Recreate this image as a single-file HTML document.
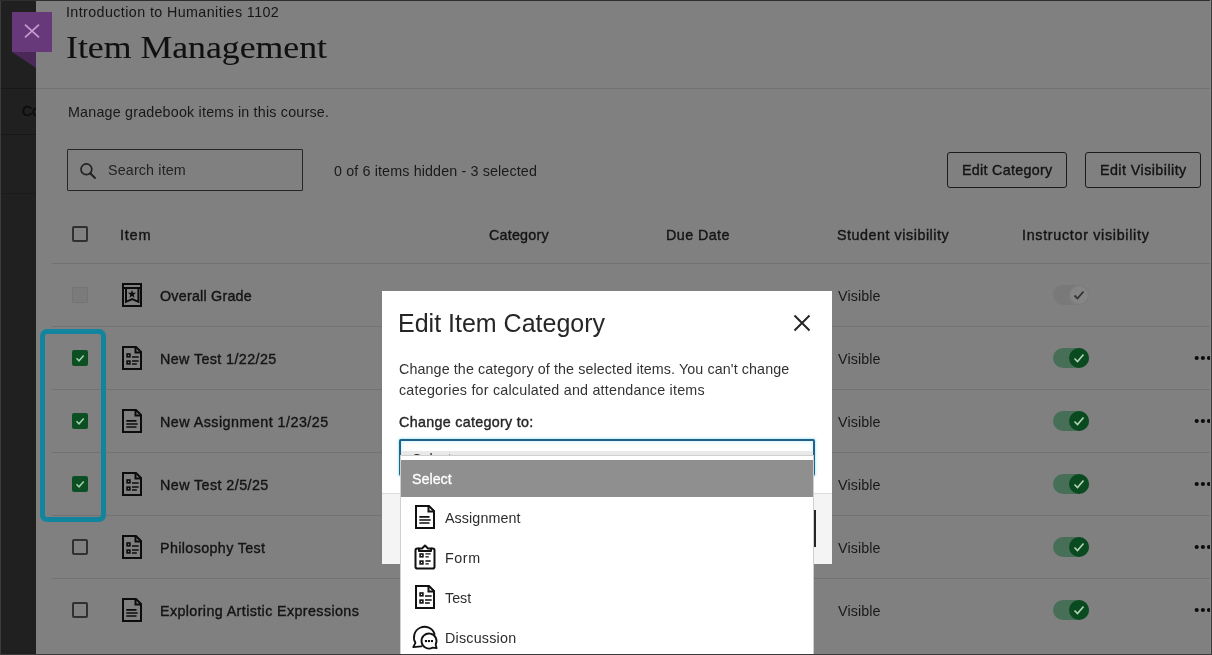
<!DOCTYPE html>
<html><head><meta charset="utf-8">
<style>
*{margin:0;padding:0;box-sizing:border-box}
html,body{width:1212px;height:655px;overflow:hidden;background:#808080}
body{position:relative;font-family:"Liberation Sans",sans-serif;color:#141414}
.a{position:absolute}
.t{position:absolute;white-space:nowrap;line-height:1;will-change:transform}
svg{position:absolute;overflow:visible}
</style></head><body>
<div class="a" style="left:0px;top:0px;width:36px;height:655px;background:#202020;"></div>
<div class="a" style="left:0px;top:0px;width:1px;height:655px;background:#3c3c3c;"></div>
<div class="a" style="left:1px;top:88px;width:35px;height:1px;background:#181818;"></div>
<div class="a" style="left:1px;top:134px;width:35px;height:1px;background:#181818;"></div>
<div class="a" style="left:1px;top:193px;width:35px;height:1px;background:#1a1a1a;"></div>
<div class="a" style="left:22px;top:104px;width:14px;height:16px;overflow:hidden"><div class="t" style="left:0;top:0;font-size:14px;color:#0c0c0c;-webkit-text-stroke:0.45px #0c0c0c">Co</div></div>
<svg style="left:12px;top:52px" width="24" height="16"><path d="M0 0H24V16Z" fill="#4a2858"/></svg>
<div class="a" style="left:12px;top:12px;width:40px;height:40px;background:#67397b;"></div>
<svg style="left:24px;top:24px" width="16" height="14"><path d="M1 0.6L15 13.4M15 0.6L1 13.4" stroke="#c29dcd" stroke-width="1.7"/></svg>
<div class="t" style="left:66px;top:4.90px;font-size:14.3px;color:#161616;letter-spacing:0.4px;">Introduction to Humanities 1102</div>
<div class="t" style="left:66px;top:28px;font-family:'Liberation Serif',serif;font-size:32px;line-height:38px;color:#101010;transform:scaleX(1.117);transform-origin:0 0;-webkit-text-stroke:0.1px #101010">Item Management</div>
<div class="a" style="left:36px;top:88px;width:1176px;height:1px;background:#727272;"></div>
<div class="t" style="left:68px;top:104.90px;font-size:14.3px;color:#181818;letter-spacing:0.2px;">Manage gradebook items in this course.</div>
<div class="a" style="left:67px;top:149px;width:236px;height:42px;background:transparent;border:1px solid #262626;border-radius:1px"></div>
<svg style="left:79px;top:162px" width="18" height="18"><circle cx="7.4" cy="7.3" r="5.4" fill="none" stroke="#222" stroke-width="1.7"/><path d="M11.5 11.5L16 16" stroke="#222" stroke-width="1.9" stroke-linecap="round"/></svg>
<div class="t" style="left:108px;top:162.90px;font-size:14.3px;color:#222;letter-spacing:0.15px;">Search item</div>
<div class="t" style="left:334px;top:163.90px;font-size:14.3px;color:#1a1a1a;letter-spacing:0.135px;">0 of 6 items hidden - 3 selected</div>
<div class="a" style="left:947px;top:152px;width:120px;height:36px;background:transparent;border:1px solid #1c1c1c;border-radius:3px"></div>
<div class="t" style="left:962px;top:162.90px;font-size:14.3px;color:#141414;letter-spacing:0.292px;-webkit-text-stroke:0.38px #141414;">Edit Category</div>
<div class="a" style="left:1085px;top:152px;width:116px;height:36px;background:transparent;border:1px solid #1c1c1c;border-radius:3px"></div>
<div class="t" style="left:1100px;top:162.90px;font-size:14.3px;color:#141414;letter-spacing:0.443px;-webkit-text-stroke:0.38px #141414;">Edit Visibility</div>
<div class="a" style="left:72px;top:226px;width:16px;height:16px;background:transparent;border:2px solid #303030;border-radius:2px"></div>
<div class="t" style="left:120px;top:227.64px;font-size:14.6px;color:#141414;letter-spacing:0.75px;-webkit-text-stroke:0.38px #141414;">Item</div>
<div class="t" style="left:489px;top:227.90px;font-size:14.3px;color:#141414;letter-spacing:0.229px;-webkit-text-stroke:0.38px #141414;">Category</div>
<div class="t" style="left:666px;top:227.90px;font-size:14.3px;color:#141414;letter-spacing:0.429px;-webkit-text-stroke:0.38px #141414;">Due Date</div>
<div class="t" style="left:837px;top:227.90px;font-size:14.3px;color:#141414;letter-spacing:0.541px;-webkit-text-stroke:0.38px #141414;">Student visibility</div>
<div class="t" style="left:1022px;top:227.90px;font-size:14.3px;color:#141414;letter-spacing:0.7px;-webkit-text-stroke:0.38px #141414;">Instructor visibility</div>
<div class="a" style="left:52px;top:263px;width:1160px;height:1px;background:#727272;"></div>
<div class="a" style="left:52px;top:326px;width:1160px;height:1px;background:#727272;"></div>
<div class="a" style="left:52px;top:389px;width:1160px;height:1px;background:#727272;"></div>
<div class="a" style="left:52px;top:452px;width:1160px;height:1px;background:#727272;"></div>
<div class="a" style="left:52px;top:515px;width:1160px;height:1px;background:#727272;"></div>
<div class="a" style="left:52px;top:578px;width:1160px;height:1px;background:#727272;"></div>
<div class="a" style="left:72px;top:287px;width:16px;height:16px;background:#7b7b7b;border:1px solid #747474;border-radius:1px"></div>
<svg style="left:122px;top:283px" width="20" height="24" viewBox="0 0 20 24"><g fill="none" stroke="#0c0c0c" stroke-width="2"><rect x="1" y="1" width="18" height="22"/><path d="M1 5H19"/><path d="M4 5V18.8L10.2 16L16.4 18.8V5"/></g><path d="M10.00 6.90L11.09 9.70L14.09 9.87L11.76 11.77L12.53 14.68L10.00 13.05L7.47 14.68L8.24 11.77L5.91 9.87L8.91 9.70Z" fill="#0c0c0c"/></svg>
<div class="t" style="left:160px;top:288.90px;font-size:14.3px;color:#141414;letter-spacing:0.225px;-webkit-text-stroke:0.38px #141414;">Overall Grade</div>
<div class="t" style="left:838px;top:288.90px;font-size:14.3px;color:#181818;letter-spacing:0.1px;">Visible</div>
<div class="a" style="left:1053px;top:285px;width:36px;height:20px;background:#797979;border-radius:10px"></div>
<div class="a" style="left:1069px;top:285px;width:20px;height:20px;background:#858585;border-radius:50%;box-shadow:0 0 0 1px #7c7c7c inset"></div>
<svg style="left:1069px;top:285px" width="20" height="20"><path d="M5.5 10.5L8.5 13.5L14.5 6.5" fill="none" stroke="#333" stroke-width="1.8"/></svg>
<div class="t" style="left:160px;top:351.90px;font-size:14.3px;color:#141414;letter-spacing:0.4px;-webkit-text-stroke:0.38px #141414;">New Test 1/22/25</div>
<div class="t" style="left:838px;top:351.90px;font-size:14.3px;color:#181818;letter-spacing:0.1px;">Visible</div>
<div class="a" style="left:1053px;top:348px;width:36px;height:20px;background:#476f57;border-radius:10px"></div>
<div class="a" style="left:1069px;top:348px;width:20px;height:20px;background:#0a4a20;border-radius:50%"></div>
<svg style="left:1069px;top:348px" width="20" height="20"><path d="M5.5 10.5L8.5 13.5L14.5 6.5" fill="none" stroke="#b5d3bc" stroke-width="1.6"/></svg>
<svg style="left:1195px;top:355px" width="20" height="6"><circle cx="1.7" cy="3" r="2.1" fill="#0c0c0c"/><circle cx="7.9" cy="3" r="2.1" fill="#0c0c0c"/><circle cx="14" cy="3" r="2.1" fill="#0c0c0c"/></svg>
<div class="a" style="left:72px;top:350px;width:16px;height:16px;background:#0b4f22;border-radius:2px"></div>
<svg style="left:72px;top:350px" width="16" height="16"><path d="M4.5 8.3L7 10.8L11.7 5.5" fill="none" stroke="#a3d0ad" stroke-width="1.5"/></svg>
<svg style="left:122px;top:346px" width="20" height="24" viewBox="0 0 20 24"><g fill="none" stroke="#0c0c0c" stroke-width="2"><path d="M1 1H14L19 6V23H1Z"/><path d="M13.5 1V6.5H19"/></g><g fill="none" stroke="#0c0c0c" stroke-width="1.6"><rect x="5.1" y="8" width="2.8" height="2.8"/><rect x="5.1" y="15.1" width="2.8" height="2.8"/></g><g stroke="#0c0c0c" stroke-width="1.5"><path d="M10 10.9H16.7M10 15H16.7M10 17.9H14.8"/></g></svg>
<div class="t" style="left:160px;top:414.90px;font-size:14.3px;color:#141414;letter-spacing:0.476px;-webkit-text-stroke:0.38px #141414;">New Assignment 1/23/25</div>
<div class="t" style="left:838px;top:414.90px;font-size:14.3px;color:#181818;letter-spacing:0.1px;">Visible</div>
<div class="a" style="left:1053px;top:411px;width:36px;height:20px;background:#476f57;border-radius:10px"></div>
<div class="a" style="left:1069px;top:411px;width:20px;height:20px;background:#0a4a20;border-radius:50%"></div>
<svg style="left:1069px;top:411px" width="20" height="20"><path d="M5.5 10.5L8.5 13.5L14.5 6.5" fill="none" stroke="#b5d3bc" stroke-width="1.6"/></svg>
<svg style="left:1195px;top:418px" width="20" height="6"><circle cx="1.7" cy="3" r="2.1" fill="#0c0c0c"/><circle cx="7.9" cy="3" r="2.1" fill="#0c0c0c"/><circle cx="14" cy="3" r="2.1" fill="#0c0c0c"/></svg>
<div class="a" style="left:72px;top:413px;width:16px;height:16px;background:#0b4f22;border-radius:2px"></div>
<svg style="left:72px;top:413px" width="16" height="16"><path d="M4.5 8.3L7 10.8L11.7 5.5" fill="none" stroke="#a3d0ad" stroke-width="1.5"/></svg>
<svg style="left:122px;top:409px" width="20" height="24" viewBox="0 0 20 24"><g fill="none" stroke="#0c0c0c" stroke-width="2"><path d="M1 1H14L19 6V23H1Z"/><path d="M13.5 1V6.5H19"/></g><g stroke="#0c0c0c" stroke-width="1.7"><path d="M4.3 11.9H14.5M4.3 15H15.7M4.3 18H14.5"/></g></svg>
<div class="t" style="left:160px;top:477.90px;font-size:14.3px;color:#141414;letter-spacing:0.429px;-webkit-text-stroke:0.38px #141414;">New Test 2/5/25</div>
<div class="t" style="left:838px;top:477.90px;font-size:14.3px;color:#181818;letter-spacing:0.1px;">Visible</div>
<div class="a" style="left:1053px;top:474px;width:36px;height:20px;background:#476f57;border-radius:10px"></div>
<div class="a" style="left:1069px;top:474px;width:20px;height:20px;background:#0a4a20;border-radius:50%"></div>
<svg style="left:1069px;top:474px" width="20" height="20"><path d="M5.5 10.5L8.5 13.5L14.5 6.5" fill="none" stroke="#b5d3bc" stroke-width="1.6"/></svg>
<svg style="left:1195px;top:481px" width="20" height="6"><circle cx="1.7" cy="3" r="2.1" fill="#0c0c0c"/><circle cx="7.9" cy="3" r="2.1" fill="#0c0c0c"/><circle cx="14" cy="3" r="2.1" fill="#0c0c0c"/></svg>
<div class="a" style="left:72px;top:476px;width:16px;height:16px;background:#0b4f22;border-radius:2px"></div>
<svg style="left:72px;top:476px" width="16" height="16"><path d="M4.5 8.3L7 10.8L11.7 5.5" fill="none" stroke="#a3d0ad" stroke-width="1.5"/></svg>
<svg style="left:122px;top:472px" width="20" height="24" viewBox="0 0 20 24"><g fill="none" stroke="#0c0c0c" stroke-width="2"><path d="M1 1H14L19 6V23H1Z"/><path d="M13.5 1V6.5H19"/></g><g fill="none" stroke="#0c0c0c" stroke-width="1.6"><rect x="5.1" y="8" width="2.8" height="2.8"/><rect x="5.1" y="15.1" width="2.8" height="2.8"/></g><g stroke="#0c0c0c" stroke-width="1.5"><path d="M10 10.9H16.7M10 15H16.7M10 17.9H14.8"/></g></svg>
<div class="t" style="left:160px;top:540.90px;font-size:14.3px;color:#141414;letter-spacing:0.371px;-webkit-text-stroke:0.38px #141414;">Philosophy Test</div>
<div class="t" style="left:838px;top:540.90px;font-size:14.3px;color:#181818;letter-spacing:0.1px;">Visible</div>
<div class="a" style="left:1053px;top:537px;width:36px;height:20px;background:#476f57;border-radius:10px"></div>
<div class="a" style="left:1069px;top:537px;width:20px;height:20px;background:#0a4a20;border-radius:50%"></div>
<svg style="left:1069px;top:537px" width="20" height="20"><path d="M5.5 10.5L8.5 13.5L14.5 6.5" fill="none" stroke="#b5d3bc" stroke-width="1.6"/></svg>
<svg style="left:1195px;top:544px" width="20" height="6"><circle cx="1.7" cy="3" r="2.1" fill="#0c0c0c"/><circle cx="7.9" cy="3" r="2.1" fill="#0c0c0c"/><circle cx="14" cy="3" r="2.1" fill="#0c0c0c"/></svg>
<div class="a" style="left:72px;top:539px;width:16px;height:16px;background:transparent;border:2px solid #303030;border-radius:2px"></div>
<svg style="left:122px;top:535px" width="20" height="24" viewBox="0 0 20 24"><g fill="none" stroke="#0c0c0c" stroke-width="2"><path d="M1 1H14L19 6V23H1Z"/><path d="M13.5 1V6.5H19"/></g><g fill="none" stroke="#0c0c0c" stroke-width="1.6"><rect x="5.1" y="8" width="2.8" height="2.8"/><rect x="5.1" y="15.1" width="2.8" height="2.8"/></g><g stroke="#0c0c0c" stroke-width="1.5"><path d="M10 10.9H16.7M10 15H16.7M10 17.9H14.8"/></g></svg>
<div class="t" style="left:160px;top:603.90px;font-size:14.3px;color:#141414;letter-spacing:0.39px;-webkit-text-stroke:0.38px #141414;">Exploring Artistic Expressions</div>
<div class="t" style="left:838px;top:603.90px;font-size:14.3px;color:#181818;letter-spacing:0.1px;">Visible</div>
<div class="a" style="left:1053px;top:600px;width:36px;height:20px;background:#476f57;border-radius:10px"></div>
<div class="a" style="left:1069px;top:600px;width:20px;height:20px;background:#0a4a20;border-radius:50%"></div>
<svg style="left:1069px;top:600px" width="20" height="20"><path d="M5.5 10.5L8.5 13.5L14.5 6.5" fill="none" stroke="#b5d3bc" stroke-width="1.6"/></svg>
<svg style="left:1195px;top:607px" width="20" height="6"><circle cx="1.7" cy="3" r="2.1" fill="#0c0c0c"/><circle cx="7.9" cy="3" r="2.1" fill="#0c0c0c"/><circle cx="14" cy="3" r="2.1" fill="#0c0c0c"/></svg>
<div class="a" style="left:72px;top:602px;width:16px;height:16px;background:transparent;border:2px solid #303030;border-radius:2px"></div>
<svg style="left:122px;top:598px" width="20" height="24" viewBox="0 0 20 24"><g fill="none" stroke="#0c0c0c" stroke-width="2"><path d="M1 1H14L19 6V23H1Z"/><path d="M13.5 1V6.5H19"/></g><g stroke="#0c0c0c" stroke-width="1.7"><path d="M4.3 11.9H14.5M4.3 15H15.7M4.3 18H14.5"/></g></svg>
<div class="a" style="left:40px;top:329px;width:66px;height:193px;background:transparent;border:5px solid #12849e;border-radius:7px"></div>
<div class="a" style="left:382px;top:291px;width:450px;height:273px;background:#fff;"></div>
<div class="a" style="left:382px;top:493px;width:450px;height:71px;background:#f4f4f4;border-top:1px solid #dcdcdc"></div>
<div class="t" style="left:398px;top:311.34px;font-size:25px;color:#262626;">Edit Item Category</div>
<svg style="left:793px;top:314px" width="18" height="18"><path d="M1.5 1.5L16.5 16.5M16.5 1.5L1.5 16.5" stroke="#262626" stroke-width="2"/></svg>
<div class="t" style="left:399px;top:361.90px;font-size:14.3px;color:#333;letter-spacing:0.103px;">Change the category of the selected items. You can't change</div>
<div class="t" style="left:399px;top:382.90px;font-size:14.3px;color:#333;letter-spacing:0.222px;">categories for calculated and attendance items</div>
<div class="t" style="left:399px;top:415.40px;font-size:14.3px;color:#262626;letter-spacing:0.306px;-webkit-text-stroke:0.38px #262626;">Change category to:</div>
<div class="a" style="left:399px;top:439px;width:416px;height:37px;background:#fff;border:2px solid #22628a;border-radius:2px;box-shadow:0 0 2px 1px rgba(120,220,240,0.5), inset 0 0 3px 1px rgba(150,230,245,0.45)"></div>
<div class="a" style="left:401px;top:451px;width:412px;height:4px;background:#e9e9e9;overflow:hidden"><div class="t" style="left:11px;top:1px;font-size:14.3px;color:#262626">Select</div></div>
<div class="a" style="left:400px;top:455px;width:414px;height:205px;background:#fff;border:1px solid #cfcfcf;border-bottom:none"></div>
<div class="a" style="left:401px;top:460px;width:412px;height:37px;background:#8f8f8f;"></div>
<div class="t" style="left:412px;top:471.90px;font-size:14.3px;color:#fff;-webkit-text-stroke:0.3px #fff;">Select</div>
<div class="a" style="left:814px;top:510px;width:2px;height:37px;background:#262626;"></div>
<div class="t" style="left:445px;top:510.90px;font-size:14.3px;color:#2c2c2c;letter-spacing:0.089px;">Assignment</div>
<div class="t" style="left:445px;top:550.90px;font-size:14.3px;color:#2c2c2c;letter-spacing:0.567px;">Form</div>
<div class="t" style="left:445px;top:590.90px;font-size:14.3px;color:#2c2c2c;">Test</div>
<div class="t" style="left:445px;top:630.90px;font-size:14.3px;color:#2c2c2c;letter-spacing:0.222px;">Discussion</div>
<svg style="left:415px;top:505px" width="20" height="24" viewBox="0 0 20 24"><g fill="none" stroke="#111" stroke-width="2"><path d="M1 1H14L19 6V23H1Z"/><path d="M13.5 1V6.5H19"/></g><g stroke="#111" stroke-width="1.7"><path d="M4.3 11.9H14.5M4.3 15H15.7M4.3 18H14.5"/></g></svg>
<svg style="left:414px;top:544px" width="22" height="26" viewBox="0 0 22 26"><g fill="none" stroke="#111" stroke-width="2" stroke-linejoin="round"><path d="M5 4.5H3.3Q1.5 4.5 1.5 6.3V22.7Q1.5 24.5 3.3 24.5H18.7Q20.5 24.5 20.5 22.7V6.3Q20.5 4.5 18.7 4.5H17"/><path d="M5 4.5V7H17V4.5H14L11 1.5L8 4.5Z"/></g><g fill="none" stroke="#111" stroke-width="1.6"><rect x="6.1" y="10" width="2.8" height="2.8"/><rect x="6.1" y="17.1" width="2.8" height="2.8"/></g><g stroke="#111" stroke-width="1.4"><path d="M11.4 9.9H16.7M11.4 12.9H14.8M11.4 17H16.7M11.4 19.9H14.8"/></g></svg>
<svg style="left:415px;top:585px" width="20" height="24" viewBox="0 0 20 24"><g fill="none" stroke="#111" stroke-width="2"><path d="M1 1H14L19 6V23H1Z"/><path d="M13.5 1V6.5H19"/></g><g fill="none" stroke="#111" stroke-width="1.6"><rect x="5.1" y="8" width="2.8" height="2.8"/><rect x="5.1" y="15.1" width="2.8" height="2.8"/></g><g stroke="#111" stroke-width="1.5"><path d="M10 10.9H16.7M10 15H16.7M10 17.9H14.8"/></g></svg>
<svg style="left:407px;top:621px" width="36" height="34" viewBox="0 0 36 34"><g fill="none" stroke="#111" stroke-width="1.85" stroke-linejoin="round" stroke-linecap="round"><path d="M27.6 13.1A10.6 10.6 0 1 0 8.4 21.8L6.3 26.2L14.2 25.3"/><path d="M25.6 26.6A7.5 7.5 0 1 1 28.6 23.6L29.6 27.2Z"/></g><g fill="#111"><rect x="17.9" y="19" width="2.1" height="2.1"/><rect x="20.9" y="19" width="2.1" height="2.1"/><rect x="23.9" y="19" width="2.1" height="2.1"/></g></svg>
<div class="a" style="left:0px;top:0px;width:1212px;height:1px;background:#2e2e2e;"></div>
<div class="a" style="left:1211px;top:0px;width:1px;height:655px;background:#3a3a3a;"></div>
<div class="a" style="left:1210px;top:0px;width:1px;height:655px;background:#8a8a8a;"></div>
<div class="a" style="left:0px;top:654px;width:1212px;height:1px;background:#3a3a3a;"></div>
</body></html>
